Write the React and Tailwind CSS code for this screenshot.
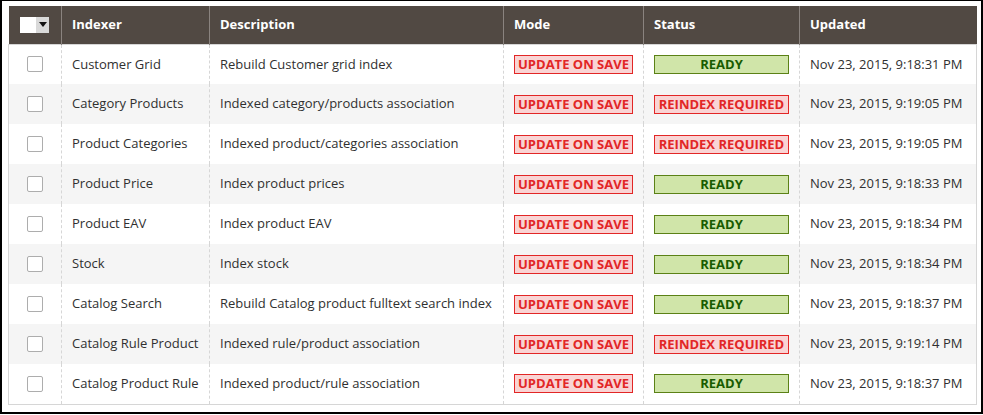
import React from "react";

const ROWS = [
  { name: "Customer Grid", desc: "Rebuild Customer grid index", status: "ready", updated: "Nov 23, 2015, 9:18:31 PM" },
  { name: "Category Products", desc: "Indexed category/products association", status: "reindex", updated: "Nov 23, 2015, 9:19:05 PM" },
  { name: "Product Categories", desc: "Indexed product/categories association", status: "reindex", updated: "Nov 23, 2015, 9:19:05 PM" },
  { name: "Product Price", desc: "Index product prices", status: "ready", updated: "Nov 23, 2015, 9:18:33 PM" },
  { name: "Product EAV", desc: "Index product EAV", status: "ready", updated: "Nov 23, 2015, 9:18:34 PM" },
  { name: "Stock", desc: "Index stock", status: "ready", updated: "Nov 23, 2015, 9:18:34 PM" },
  { name: "Catalog Search", desc: "Rebuild Catalog product fulltext search index", status: "ready", updated: "Nov 23, 2015, 9:18:37 PM" },
  { name: "Catalog Rule Product", desc: "Indexed rule/product association", status: "reindex", updated: "Nov 23, 2015, 9:19:14 PM" },
  { name: "Catalog Product Rule", desc: "Indexed product/rule association", status: "ready", updated: "Nov 23, 2015, 9:18:37 PM" },
];

const RED = "block w-full h-[19px] leading-[17px] text-center border border-[#e22626] bg-[#f9d4d4] text-[#e22626] font-bold text-[13px] uppercase";
const GREEN = "block w-full h-[19px] leading-[17px] text-center border border-[#5b8116] bg-[#d0e5a9] text-[#185b00] font-bold text-[13px] uppercase";

function MassCheckbox() {
  return (
    <div className="flex h-4 w-[29px] mx-auto">
      <div className="w-4 h-4 bg-white" />
      <div className="w-[13px] h-4 bg-[#d9d9d9] flex items-center justify-center">
        <svg width="8" height="5" viewBox="0 0 8 5"><path d="M0 0h8L4 5z" fill="#111" /></svg>
      </div>
    </div>
  );
}

export default function App() {
  return (
    <div className="w-[983px] h-[415px] bg-white" style={{ fontFamily: '"Open Sans", "Liberation Sans", sans-serif' }}>
      <div className="h-[414px] border-t border-l-2 border-r-2 border-b-2 border-black pt-[5px] pl-[6px] pr-[5px]">
        <table className="w-[968px] table-fixed border-collapse text-[13px] text-[#303030]">
          <colgroup>
            <col className="w-[53px]" />
            <col className="w-[148px]" />
            <col className="w-[294px]" />
            <col className="w-[140px]" />
            <col className="w-[156px]" />
            <col className="w-[177px]" />
          </colgroup>
          <thead>
            <tr className="h-[38px] bg-[#514943] text-white text-left font-bold">
              <th className="border-r border-[#8a837f] px-[11px]"><MassCheckbox /></th>
              <th className="border-r border-[#8a837f] px-[10px] font-bold">Indexer</th>
              <th className="border-r border-[#8a837f] px-[10px] font-bold">Description</th>
              <th className="border-r border-[#8a837f] px-[10px] font-bold">Mode</th>
              <th className="border-r border-[#8a837f] px-[10px] font-bold">Status</th>
              <th className="px-[10px] font-bold">Updated</th>
            </tr>
          </thead>
          <tbody className="border border-[#d6d6d6]">
            {ROWS.map((r, i) => (
              <tr key={r.name} className={`h-10 ${i % 2 === 1 ? "bg-[#f5f5f5]" : "bg-white"}`}>
                <td className="border-r border-dashed border-[#d6d6d6]">
                  <div className="w-4 h-4 mx-auto border border-[#adadad] rounded-[2px] bg-white" />
                </td>
                <td className="border-r border-dashed border-[#d6d6d6] px-[10px] whitespace-nowrap">{r.name}</td>
                <td className="border-r border-dashed border-[#d6d6d6] px-[10px] whitespace-nowrap">{r.desc}</td>
                <td className="border-r border-dashed border-[#d6d6d6] px-[10px]">
                  <span className={RED}>Update on Save</span>
                </td>
                <td className="border-r border-dashed border-[#d6d6d6] px-[10px]">
                  {r.status === "ready"
                    ? <span className={GREEN}>Ready</span>
                    : <span className={RED}>Reindex Required</span>}
                </td>
                <td className="px-[10px] whitespace-nowrap">{r.updated}</td>
              </tr>
            ))}
          </tbody>
        </table>
      </div>
    </div>
  );
}
